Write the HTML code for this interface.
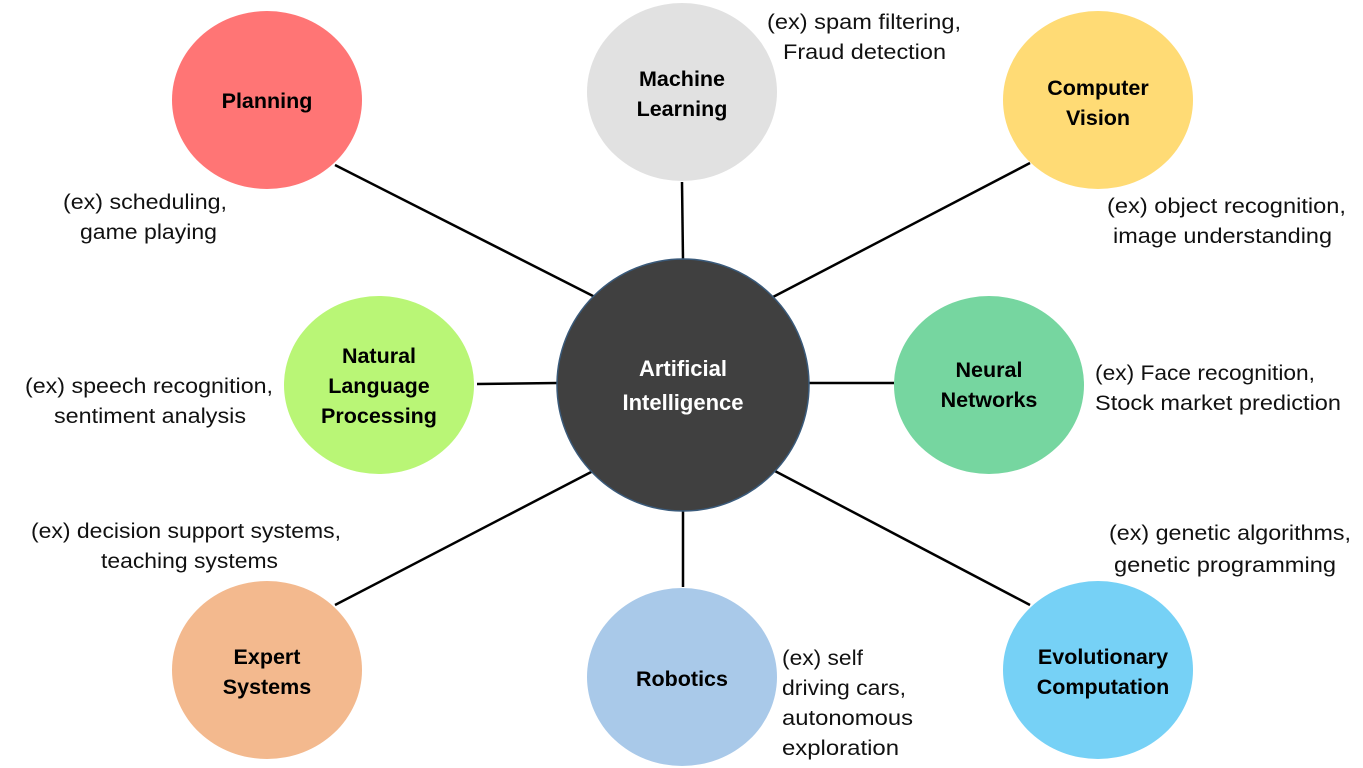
<!DOCTYPE html>
<html><head><meta charset="utf-8"><style>
html,body{margin:0;padding:0;background:#fff;width:1363px;height:768px;overflow:hidden}
svg text{font-family:"Liberation Sans",sans-serif}
.l{font-size:21.5px;font-weight:bold;fill:#000;text-anchor:middle}
.a{font-size:21px;fill:#111}
</style></head><body>
<svg width="1363" height="768" xmlns="http://www.w3.org/2000/svg">
<g stroke="#000" stroke-width="2.5">
<line x1="335" y1="165" x2="595" y2="297"/>
<line x1="682" y1="182" x2="683" y2="260"/>
<line x1="1030" y1="163" x2="773" y2="297"/>
<line x1="477" y1="384" x2="557" y2="383"/>
<line x1="809" y1="383" x2="894" y2="383"/>
<line x1="335" y1="605" x2="595" y2="470"/>
<line x1="683" y1="508" x2="683" y2="587"/>
<line x1="1030" y1="605" x2="773" y2="470"/>
</g>
<ellipse cx="267" cy="100" rx="95" ry="89" fill="#FF7575"/>
<ellipse cx="682" cy="92" rx="95" ry="89" fill="#E1E1E1"/>
<ellipse cx="1098" cy="100" rx="95" ry="89" fill="#FFDB75"/>
<ellipse cx="379" cy="385" rx="95" ry="89" fill="#B9F676"/>
<ellipse cx="989" cy="385" rx="95" ry="89" fill="#76D6A0"/>
<ellipse cx="267" cy="670" rx="95" ry="89" fill="#F3B98E"/>
<ellipse cx="682" cy="677" rx="95" ry="89" fill="#A9C9E9"/>
<ellipse cx="1098" cy="670" rx="95" ry="89" fill="#76D1F6"/>
<circle cx="683" cy="385" r="126" fill="#404040" stroke="#3a5a7a" stroke-width="1.5"/>
<text class="l" x="683" y="376" style="fill:#fff;font-size:22px">Artificial</text>
<text class="l" x="683" y="410" style="fill:#fff;font-size:22px">Intelligence</text>
<text class="l" x="267" y="108">Planning</text>
<text class="l" x="682" y="86">Machine</text>
<text class="l" x="682" y="116">Learning</text>
<text class="l" x="1098" y="95">Computer</text>
<text class="l" x="1098" y="125">Vision</text>
<text class="l" x="379" y="363">Natural</text>
<text class="l" x="379" y="393">Language</text>
<text class="l" x="379" y="423">Processing</text>
<text class="l" x="989" y="377">Neural</text>
<text class="l" x="989" y="407">Networks</text>
<text class="l" x="267" y="664">Expert</text>
<text class="l" x="267" y="694">Systems</text>
<text class="l" x="682" y="686">Robotics</text>
<text class="l" x="1103" y="664">Evolutionary</text>
<text class="l" x="1103" y="694">Computation</text>

<text class="a" x="767" y="29" textLength="194" lengthAdjust="spacingAndGlyphs">(ex) spam filtering,</text>
<text class="a" x="783" y="59" textLength="163" lengthAdjust="spacingAndGlyphs">Fraud detection</text>
<text class="a" x="63" y="209" textLength="164" lengthAdjust="spacingAndGlyphs">(ex) scheduling,</text>
<text class="a" x="80" y="239" textLength="137" lengthAdjust="spacingAndGlyphs">game playing</text>
<text class="a" x="1107" y="213" textLength="239" lengthAdjust="spacingAndGlyphs">(ex) object recognition,</text>
<text class="a" x="1113" y="243" textLength="219" lengthAdjust="spacingAndGlyphs">image understanding</text>
<text class="a" x="25" y="393" textLength="248" lengthAdjust="spacingAndGlyphs">(ex) speech recognition,</text>
<text class="a" x="54" y="423" textLength="192" lengthAdjust="spacingAndGlyphs">sentiment analysis</text>
<text class="a" x="1095" y="380" textLength="220" lengthAdjust="spacingAndGlyphs">(ex) Face recognition,</text>
<text class="a" x="1095" y="410" textLength="246" lengthAdjust="spacingAndGlyphs">Stock market prediction</text>
<text class="a" x="31" y="538" textLength="310" lengthAdjust="spacingAndGlyphs">(ex) decision support systems,</text>
<text class="a" x="101" y="568" textLength="177" lengthAdjust="spacingAndGlyphs">teaching systems</text>
<text class="a" x="1109" y="540" textLength="242" lengthAdjust="spacingAndGlyphs">(ex) genetic algorithms,</text>
<text class="a" x="1114" y="572" textLength="222" lengthAdjust="spacingAndGlyphs">genetic programming</text>
<text class="a" x="782" y="665" textLength="81" lengthAdjust="spacingAndGlyphs">(ex) self</text>
<text class="a" x="782" y="695" textLength="124" lengthAdjust="spacingAndGlyphs">driving cars,</text>
<text class="a" x="782" y="725" textLength="131" lengthAdjust="spacingAndGlyphs">autonomous</text>
<text class="a" x="782" y="755" textLength="117" lengthAdjust="spacingAndGlyphs">exploration</text>
</svg>
</body></html>
